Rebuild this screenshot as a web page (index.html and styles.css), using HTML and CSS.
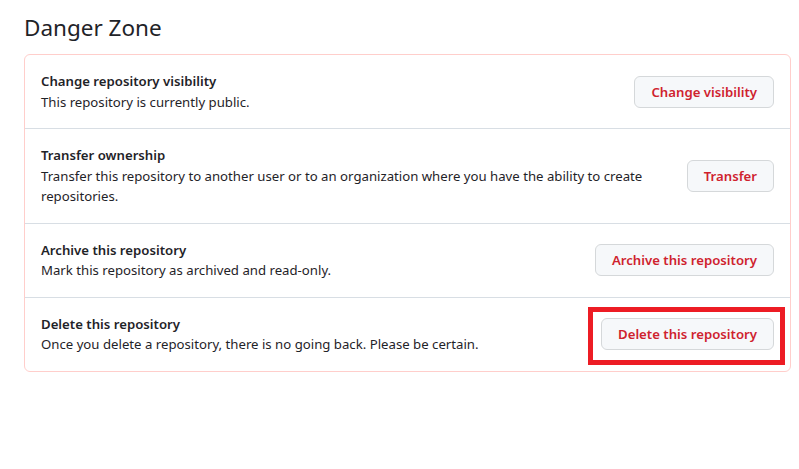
FILE: index.html
```html
<!DOCTYPE html>
<html lang="en">
<head>
  <meta charset="UTF-8">
  <meta name="viewport" content="width=device-width, initial-scale=1.0">
  <title>Danger Zone</title>
  <link rel="stylesheet" href="styles.css">
</head>
<body>
  <div class="settings">
    <h2 class="zone-title">Danger Zone</h2>

    <div class="danger-box">
      <!-- Видимость -->
      <div class="danger-row">
        <div class="row-text">
          <strong>Change repository visibility</strong>
          <p>This repository is currently public.</p>
        </div>
        <button class="btn-danger">Change visibility</button>
      </div>

      <!-- Передача -->
      <div class="danger-row">
        <div class="row-text narrow">
          <strong>Transfer ownership</strong>
          <p>Transfer this repository to another user or to an organization where you have the ability to create repositories.</p>
        </div>
        <button class="btn-danger">Transfer</button>
      </div>

      <!-- Архив -->
      <div class="danger-row">
        <div class="row-text">
          <strong>Archive this repository</strong>
          <p>Mark this repository as archived and read-only.</p>
        </div>
        <button class="btn-danger">Archive this repository</button>
      </div>

      <!-- Удаление -->
      <div class="danger-row">
        <div class="row-text">
          <strong>Delete this repository</strong>
          <p>Once you delete a repository, there is no going back. Please be certain.</p>
        </div>
        <span class="highlight">
          <button class="btn-danger">Delete this repository</button>
        </span>
      </div>
    </div>
  </div>
</body>
</html>
```

FILE: styles.css
```css
body {
  margin: 0;
  background-color: #fff;
  font-family: "Noto Sans", "Open Sans", sans-serif;
  color: #1f2328;
}

.settings {
  width: 767px;
  margin-left: 24px;
  padding-top: 10px;
}

.zone-title {
  margin: 0 0 8px;
  font-size: 22.5px;
  font-weight: 400;
  line-height: 36px;
}

.danger-box {
  border: 1px solid #ffcecb;
  border-radius: 6px;
}

.danger-row {
  display: flex;
  align-items: center;
  justify-content: space-between;
  padding: 16px;
  border-top: 1px solid #d8dee4;
}

.danger-row:first-child {
  border-top: none;
}

.row-text {
  font-size: 13.2px;
  line-height: 20.5px;
}

.row-text.narrow {
  max-width: 620px;
}

.row-text strong {
  display: block;
  font-weight: 600;
}

.row-text p {
  margin: 0;
}

.btn-danger {
  padding: 0 16px;
  height: 32px;
  font-family: inherit;
  font-size: 13.2px;
  font-weight: 600;
  color: #cf222e;
  background-color: #f6f8fa;
  border: 1px solid #d5d8da;
  border-radius: 6px;
  white-space: nowrap;
  cursor: pointer;
}

.highlight {
  position: relative;
  display: inline-flex;
}

.highlight::after {
  content: "";
  position: absolute;
  top: -11px;
  left: -13px;
  right: -11px;
  bottom: -15px;
  border: 5px solid #ed1c24;
}
```
